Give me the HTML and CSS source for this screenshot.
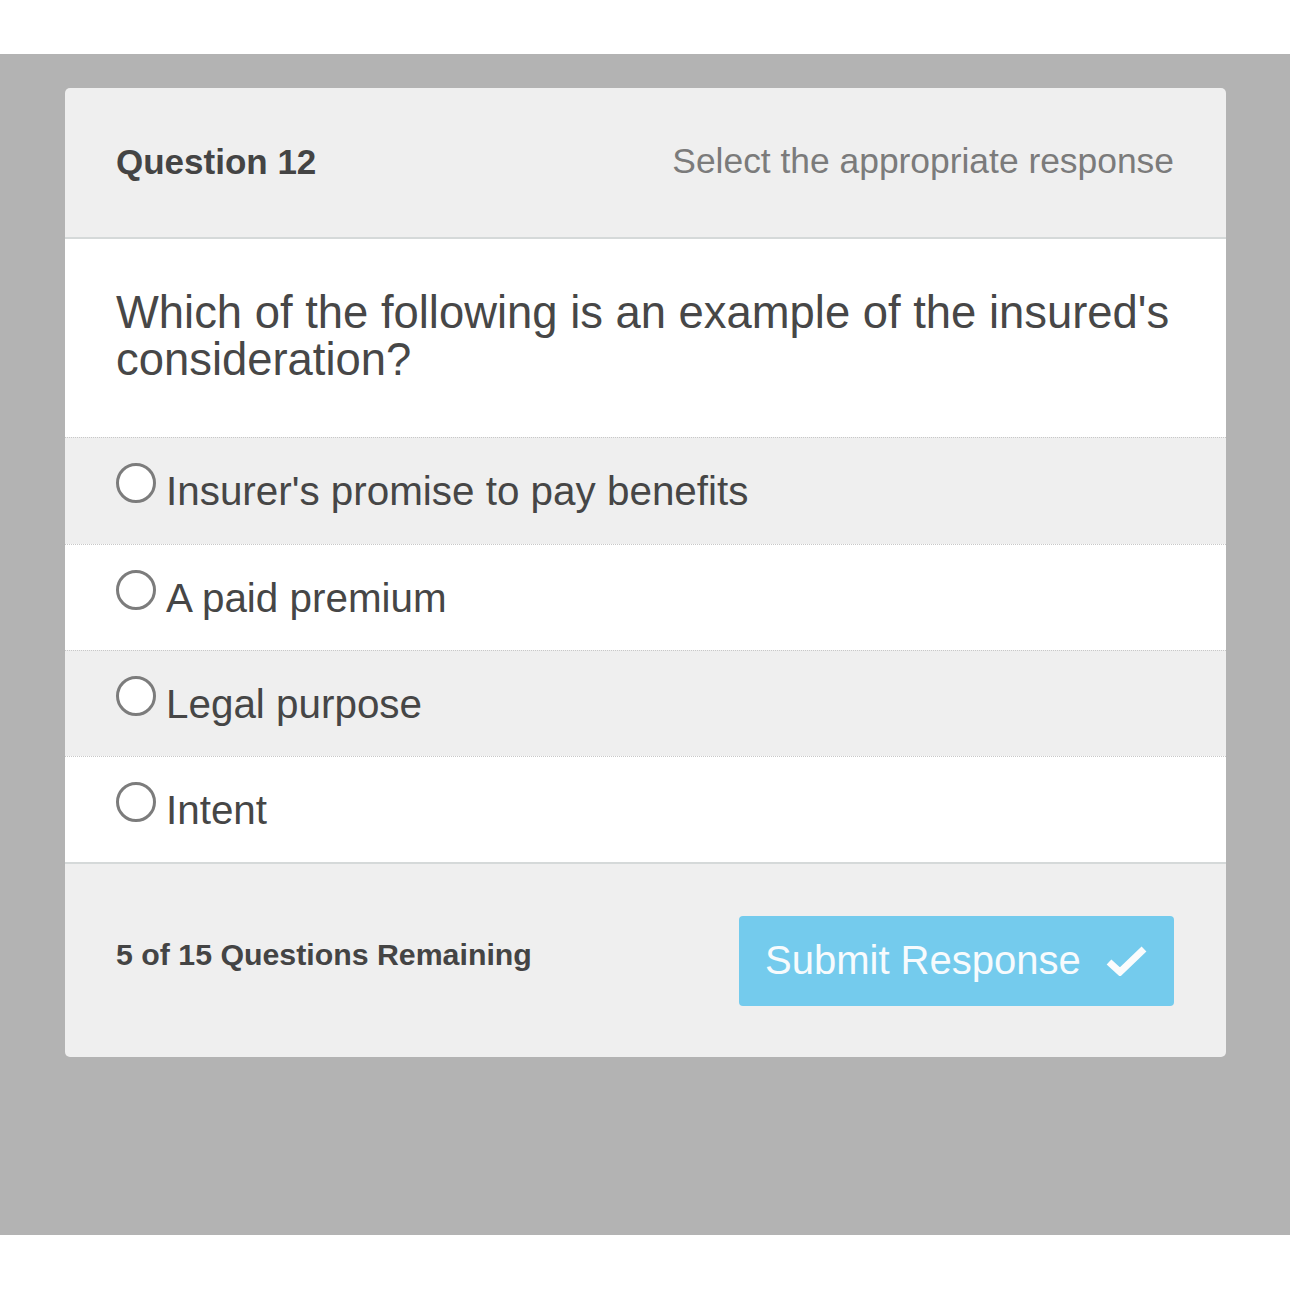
FILE: index.html
```html
<!DOCTYPE html>
<html lang="en">
<head>
<meta charset="utf-8">
<title>Question 12</title>
<link rel="stylesheet" href="styles.css">
</head>
<body>
<div class="top-space"></div>
<main class="stage">
  <section class="card">
    <header class="card-head">
      <h1 class="q-num">Question 12</h1>
      <span class="q-hint">Select the appropriate response</span>
    </header>
    <div class="q-body">
      <p class="q-text">Which of the following is an example of the insured's consideration?</p>
    </div>
    <ul class="options">
      <li class="option alt first"><span class="radio"></span><span class="opt-label">Insurer's promise to pay benefits</span></li>
      <li class="option"><span class="radio"></span><span class="opt-label">A paid premium</span></li>
      <li class="option alt"><span class="radio"></span><span class="opt-label">Legal purpose</span></li>
      <li class="option"><span class="radio"></span><span class="opt-label">Intent</span></li>
    </ul>
    <footer class="card-foot">
      <span class="remaining">5 of 15 Questions Remaining</span>
      <button class="submit" type="button">
        <span class="submit-label">Submit Response</span>
        <svg class="check" width="42" height="30" viewBox="0 0 42 30" aria-hidden="true">
          <polyline points="3,16 14,26 38,3" fill="none" stroke="#fafcfd" stroke-width="7" stroke-linejoin="miter"/>
        </svg>
      </button>
    </footer>
  </section>
</main>
<div class="bottom-space"></div>
</body>
</html>
```
FILE: styles.css
```css
html, body {
  margin: 0;
  padding: 0;
  background: #ffffff;
}
body {
  font-family: "Liberation Sans", Arial, Helvetica, sans-serif;
  color: #454545;
}
.top-space {
  height: 54px;
}
.stage {
  background: #b3b3b3;
  height: 1181px;
  box-sizing: border-box;
  padding: 34px 64px 0 65px;
}
.card {
  background: #efefef;
  border-radius: 5px;
  overflow: hidden;
}
.card-head {
  height: 151px;
  box-sizing: border-box;
  padding: 0 52px 2px 51px;
  display: flex;
  align-items: center;
  justify-content: space-between;
  border-bottom: 2px solid #d5d9d9;
}
.q-num {
  margin: 0;
  font-size: 35px;
  font-weight: bold;
  color: #444444;
}
.q-hint {
  font-size: 35.4px;
  color: #7b7b7b;
}
.q-body {
  background: #ffffff;
  padding: 50px 40px 54px 51px;
}
.q-text {
  margin: 0;
  font-size: 45.4px;
  line-height: 47px;
  color: #474747;
}
.options {
  list-style: none;
  margin: 0;
  padding: 0;
}
.option {
  height: 106px;
  box-sizing: border-box;
  border-top: 1px dotted #c8c8c8;
  background: #ffffff;
  display: flex;
  align-items: center;
  padding-left: 51px;
}
.option.first {
  height: 107px;
}
.option.alt {
  background: #efefef;
}
.radio {
  width: 40px;
  height: 40px;
  box-sizing: border-box;
  border: 3px solid #7c7c7c;
  border-radius: 50%;
  background: #ffffff;
  margin-right: 10px;
  margin-bottom: 16px;
  flex: none;
}
.opt-label {
  font-size: 40.4px;
  line-height: 46px;
  color: #464646;
}
.card-foot {
  height: 195px;
  box-sizing: border-box;
  border-top: 2px solid #d5d9d9;
  display: flex;
  align-items: center;
  justify-content: space-between;
  padding: 0 52px 0 51px;
}
.remaining {
  font-size: 30.3px;
  font-weight: bold;
  color: #444444;
  margin-bottom: 12px;
}
.submit {
  width: 435px;
  height: 90px;
  border: none;
  border-radius: 4px;
  background: #74cbed;
  display: flex;
  align-items: center;
  justify-content: space-between;
  padding: 0 26px 0 26px;
  font-family: "Liberation Sans", Arial, Helvetica, sans-serif;
  cursor: pointer;
}
.submit-label {
  font-size: 40px;
  color: #f7fbfd;
}
.check {
  display: block;
}
.bottom-space {
  height: 55px;
}
```
